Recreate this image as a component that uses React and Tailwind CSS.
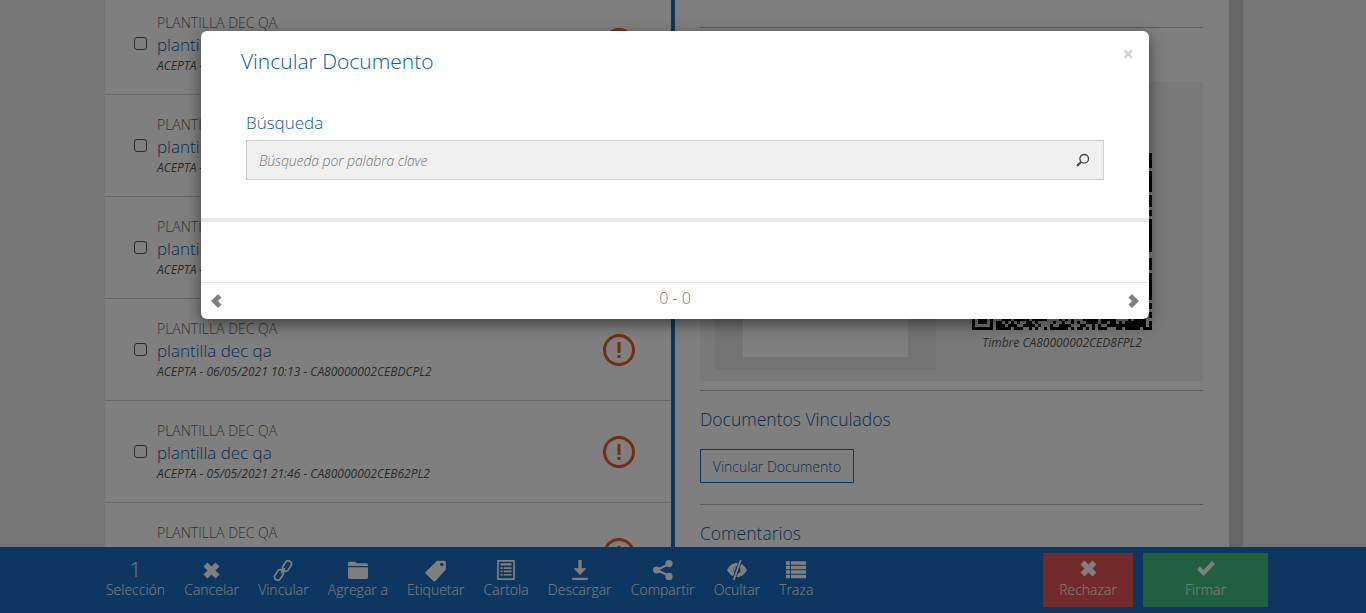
const docs = [
  { id: 1, meta: "ACEPTA - 07/05/2021 11:02 - CA80000002CEDA1PL2" },
  { id: 2, meta: "ACEPTA - 07/05/2021 09:40 - CA80000002CED70PL2" },
  { id: 3, meta: "ACEPTA - 06/05/2021 17:21 - CA80000002CEC9EPL2" },
  { id: 4, meta: "ACEPTA - 06/05/2021 10:13 - CA80000002CEBDCPL2" },
  { id: 5, meta: "ACEPTA - 05/05/2021 21:46 - CA80000002CEB62PL2" },
  { id: 6, meta: "ACEPTA - 05/05/2021 18:05 - CA80000002CEB11PL2" },
];

// the stamp is just noise with a finder square, seeded so it stays the same
function Stamp() {
  let seed = 17;
  const next = () => {
    seed = (seed * 16807) % 2147483647;
    return seed / 2147483647;
  };
  let d = "";
  for (let y = 0; y < 60; y++) {
    for (let x = 0; x < 60; x++) {
      if (x < 8 && y > 51) continue;
      const limit = x === 59 ? 0.15 : 0.42;
      if (next() > limit) d += `M${x * 3} ${y * 3}h3v3h-3z`;
    }
  }
  return (
    <svg width="180" height="180" viewBox="0 0 180 180" shapeRendering="crispEdges">
      <path d={d} fill="#000" />
      <path d="M0 159h21v21H0zM3 162v15h15v-15zM6 165h9v9H6z" fill="#000" fillRule="evenodd" />
    </svg>
  );
}

function AlertIcon() {
  return (
    <svg width="32" height="34" viewBox="0 0 32 34" fill="none">
      <circle cx="16" cy="17" r="14.5" stroke="#e85c25" strokeWidth="3" />
      <rect x="14.5" y="9" width="3" height="11" fill="#e85c25" />
      <rect x="14.5" y="22" width="3" height="3" fill="#e85c25" />
    </svg>
  );
}

function Chevron({ flip }) {
  return (
    <svg width="11" height="14" viewBox="0 0 11 14" className={flip ? "rotate-180 fill-[#808080]" : "fill-[#808080]"}>
      <path d="M7 0l3.500 3.500L7 7l3.500 3.500L7 14 0 7z" />
    </svg>
  );
}

function DocRow({ meta }) {
  return (
    <div className="flex h-[102px] shrink-0 items-center border-b border-[#c8c8c8] pl-[29px] pr-[36px]">
      <span className="mr-[10px] h-[13px] w-[13px] rounded-[3px] border border-[#555] bg-white" />
      <div className="flex-1">
        <div className="text-[14px] font-light leading-[20px] text-[#666]">PLANTILLA DEC QA</div>
        <div className="text-[17px] font-light leading-[24px] text-[#14598f]">plantilla dec qa</div>
        <div className="text-[12px] italic leading-[18px] text-[#555]">{meta}</div>
      </div>
      <AlertIcon />
    </div>
  );
}

function Tool({ label, children }) {
  return (
    <div className="flex flex-col items-center">
      <div className="flex h-[24px] w-[26px] items-center justify-center">{children}</div>
      <span className="-mt-[2px] text-[14px] font-light leading-[20px]">{label}</span>
    </div>
  );
}

const ic = "fill-current";
const cross = "M4.500.5l4 4 4-4 4 4-4 4 4 4-4 4-4-4-4 4-4-4 4-4-4-4z";

export default function App() {
  return (
    <div className="relative flex h-[613px] flex-col overflow-hidden bg-[#ececec] font-['Open_Sans',sans-serif]">
      <div className="flex min-h-0 flex-1">
        <div className="w-[105px] shrink-0 bg-[#ececec]" />

        <div className="-mt-[7px] flex w-[566px] shrink-0 flex-col bg-white">
          {docs.map((doc) => (
            <DocRow key={doc.id} meta={doc.meta} />
          ))}
        </div>
        <div className="w-[4px] shrink-0 bg-[#1a6cc0]" />

        <div className="w-[554px] shrink-0 bg-white pl-[25px] pr-[26px]">
          <div className="mt-[27px] border-t border-[#bbb]" />
          <div className="mt-[54px] flex h-[299px] bg-[#f2f2f2] pl-[15px]">
            <div className="flex h-[288px] w-[221px] items-end justify-center bg-[#e6e6e6]">
              <div className="mb-[13px] h-[100px] w-[165px] bg-white" />
            </div>
            <div className="ml-[36px] mt-[68px] w-[180px]">
              <Stamp />
              <div className="mt-[4px] text-center text-[12px] italic leading-[18px] text-[#555]">Timbre CA80000002CED8FPL2</div>
            </div>
          </div>
          <div className="mt-[9px] border-t border-[#bbb]" />
          <div className="mt-[16px] text-[17.5px] font-light leading-[24px] text-[#14598f]">Documentos Vinculados</div>
          <button className="mt-[18px] h-[34px] w-[154px] border border-[#1a6cc0] text-[14px] font-light text-[#14598f]">Vincular Documento</button>
          <div className="mt-[21px] border-t border-[#bbb]" />
          <div className="mt-[16px] text-[17.5px] font-light leading-[24px] text-[#14598f]">Comentarios</div>
        </div>

        <div className="w-[14px] shrink-0 bg-[#cccccc]" />
        <div className="flex-1 bg-[#ececec]" />
      </div>

      <div className="relative flex h-[66px] shrink-0 items-start bg-[#1b6ec2] pl-[106px] pr-[98px] pt-[11px] text-white">
        <div className="flex gap-[19.2px]">
          <div className="flex w-[59px] flex-col items-center">
            <div className="flex h-[24px] items-center text-[20px] font-light">1</div>
            <span className="-mt-[2px] text-[14px] font-light leading-[20px]">Selección</span>
          </div>
          <Tool label="Cancelar">
            <svg width="17" height="17" viewBox="0 0 17 17" className={ic}>
              <path d={cross} />
            </svg>
          </Tool>
          <Tool label="Vincular">
            <svg width="20" height="21" viewBox="0 0 20 21" fill="none" stroke="currentColor" strokeWidth="1.700">
              <rect x="8.500" y="2.800" width="11" height="6.400" rx="3.200" transform="rotate(-58 14 6)" />
              <rect x="0.500" y="11.800" width="11" height="6.400" rx="3.200" transform="rotate(-58 6 15)" />
              <path d="M8.500 13L11.500 8" strokeWidth="2" />
            </svg>
          </Tool>
          <Tool label="Agregar a">
            <svg width="20" height="18" viewBox="1 1 18 16" className={ic}>
              <path d="M1 3C1 2.200 1.700 1.500 2.500 1.500H7.500l1.500 1.500h8.500c.8 0 1.500.7 1.500 1.500V5.500H1z" />
              <path d="M1 6.500h18v9c0 .8-.7 1.500-1.500 1.500h-15C1.700 17 1 16.300 1 15.500z" />
            </svg>
          </Tool>
          <Tool label="Etiquetar">
            <svg width="22" height="23" viewBox="0 0 20 21" className={ic}>
              <path fillRule="evenodd" d="M11 1.500h6.500c.8 0 1.500.7 1.500 1.500v6.500L9.500 20c-.6.600-1.400.6-2 0L.8 13.500c-.6-.6-.6-1.400 0-2zM15.300 3.500a1.600 1.600 0 100 3.200 1.600 1.600 0 000-3.200z" />
            </svg>
          </Tool>
          <Tool label="Cartola">
            <svg width="18" height="20" viewBox="1 1 16 18" className={ic}>
              <path fillRule="evenodd" d="M1 1h16v18H1zM2.500 2.500v15h13v-15zM4 4h10v2H4zM4 7.500h2v1.500H4zM7 7.500h7v1.500H7zM4 10.500h2V12H4zM7 10.500h7V12H7zM4 13.500h2V15H4zM7 13.500h7V15H7z" />
            </svg>
          </Tool>
          <Tool label="Descargar">
            <svg width="16" height="20" viewBox="1 1 14 18" className={ic}>
              <path d="M6.500 1h3v7.500H14l-6 6-6-6h4.500zM1 17h14v2H1z" />
            </svg>
          </Tool>
          <Tool label="Compartir">
            <svg width="20" height="20" viewBox="0 0 20 20" fill="none" stroke="currentColor">
              <path d="M16 4L4 10l12 6" strokeWidth="2.200" />
              <circle cx="16" cy="3.600" r="3.600" fill="currentColor" stroke="none" />
              <circle cx="3.600" cy="10" r="3.600" fill="currentColor" stroke="none" />
              <circle cx="16" cy="16.400" r="3.600" fill="currentColor" stroke="none" />
            </svg>
          </Tool>
          <Tool label="Ocultar">
            <svg width="22" height="22" viewBox="0 0 22 22">
              <path d="M1 11C3.500 6.500 7 4 11 4s7.500 2.500 10 7c-2.500 4.500-6 7-10 7S3.500 15.500 1 11z" fill="currentColor" />
              <circle cx="11" cy="11" r="3.500" fill="#1b6ec2" />
              <path d="M15 0.500L7.500 21.500" stroke="#1b6ec2" strokeWidth="3.500" />
              <path d="M14.700 1L7.800 21" stroke="currentColor" strokeWidth="1.800" />
              <path d="M9.800 8.500A3 3 0 008.500 12" stroke="currentColor" strokeWidth="1.300" fill="none" />
            </svg>
          </Tool>
          <Tool label="Traza">
            <svg width="20" height="20" viewBox="0 0 20 18.500" className={ic}>
              <path d="M0 .5h4V4H0zM5 .5h15V4H5zM0 5h4v3.500H0zM5 5h15v3.500H5zM0 9.500h4V13H0zM5 9.500h15V13H5zM0 14h4v3.500H0zM5 14h15v3.500H5z" />
            </svg>
          </Tool>
        </div>
        <div className="ml-auto -mt-[5px] flex gap-[10px]">
          <div className="flex h-[54px] w-[90px] flex-col items-center justify-center bg-[#e55555]">
            <svg width="17" height="17" viewBox="0 0 17 17" className={ic}>
              <path d={cross} />
            </svg>
            <span className="mt-[3px] text-[14px] font-light leading-[20px]">Rechazar</span>
          </div>
          <div className="flex h-[54px] w-[125px] flex-col items-center justify-center bg-[#42c07f]">
            <svg width="20" height="17" viewBox="0 0 20 17" className={ic}>
              <path d="M1 9.500l3-3 3.500 3.500L16 1l3 3L7.500 16z" />
            </svg>
            <span className="mt-[3px] text-[14px] font-light leading-[20px]">Firmar</span>
          </div>
        </div>
      </div>

      {/* modal */}
      <div className="absolute inset-0 flex items-start bg-black/50 pl-[201px] pt-[31px]">
        <div className="relative flex h-[288px] w-[948px] flex-col rounded-[6px] bg-white shadow-[0_5px_15px_rgba(0,0,0,0.5)]">
          <button className="absolute right-[15px] top-[13px] text-[20px] font-bold leading-[20px] text-[#cfcfcf]">×</button>
          <h4 className="pl-[40px] pt-[16px] text-[21px] font-light leading-[28px] text-[#0a5a9c]">Vincular Documento</h4>
          <div className="px-[45px] pt-[36px]">
            <label className="block text-[17px] font-light leading-[24px] text-[#0a5a9c]">Búsqueda</label>
            <div className="mt-[5px] flex h-[40px] items-center justify-between border border-[#ccc] bg-[#f0f0f0] pl-[12px] pr-[13px]">
              <span className="text-[14px] font-light italic tracking-[-0.1px] text-[#777]">Búsqueda por palabra clave</span>
              <svg width="14" height="14" viewBox="0 0 14 14" fill="none" stroke="#444">
                <circle cx="8.200" cy="5.800" r="4.300" strokeWidth="1.300" />
                <path d="M5 9L1 13" strokeWidth="2" />
              </svg>
            </div>
          </div>
          <div className="mt-[38px] h-[4px] bg-[#e8e8e8]" />
          <div className="flex-1" />
          <div className="flex h-[37px] items-center justify-between border-t border-[#e8e8e8] px-[10px]">
            <Chevron />
            <span className="-mt-[7px] text-[16px] font-light text-[#777]">0 - 0</span>
            <Chevron flip />
          </div>
        </div>
      </div>
    </div>
  );
}
